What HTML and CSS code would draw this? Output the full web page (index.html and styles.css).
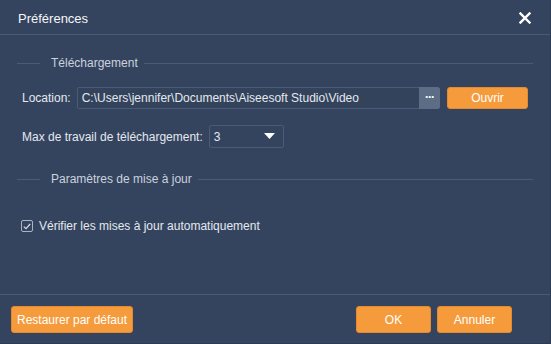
FILE: index.html
```html
<!DOCTYPE html>
<html lang="fr">
<head>
    <meta charset="UTF-8">
    <title>Préférences</title>
    <link rel="stylesheet" href="styles.css">
</head>
<body>
    <div class="dialog">
        <header class="title-bar">
            <h1>Préférences</h1>
            <span class="close">
                <svg width="12" height="12" viewBox="0 0 12 12">
                    <path d="M1.5 1.5 L10.5 10.5 M10.5 1.5 L1.5 10.5" stroke="#ffffff" stroke-width="2.4" stroke-linecap="square"/>
                </svg>
            </span>
        </header>

        <main class="content">
            <div class="legend">
                <span class="line-short"></span>
                <span class="legend-text">Téléchargement</span>
                <span class="line-long"></span>
            </div>

            <div class="row row-location">
                <span class="label">Location:</span>
                <div class="path-field">
                    <span class="path-text">C:\Users\jennifer\Documents\Aiseesoft Studio\Video</span>
                    <span class="browse">&middot;&middot;&middot;</span>
                </div>
                <button class="btn btn-open">Ouvrir</button>
            </div>

            <div class="row row-max">
                <span class="label">Max de travail de téléchargement:</span>
                <div class="select">
                    <span>3</span>
                    <svg width="11" height="7" viewBox="0 0 11 7"><path d="M0 0 H11 L5.5 6 Z" fill="#ffffff"/></svg>
                </div>
            </div>

            <div class="legend legend-update">
                <span class="line-short"></span>
                <span class="legend-text">Paramètres de mise à jour</span>
                <span class="line-long"></span>
            </div>

            <label class="check-row">
                <span class="checkbox">
                    <svg width="8" height="7" viewBox="0 0 8 7"><path d="M0.8 3.6 L3 5.6 L7.2 1" stroke="#d8dee7" stroke-width="1.2" fill="none"/></svg>
                </span>
                <span>Vérifier les mises à jour automatiquement</span>
            </label>
        </main>

        <footer class="footer">
            <button class="btn btn-reset">Restaurer par défaut</button>
            <div class="actions">
                <button class="btn btn-ok">OK</button>
                <button class="btn btn-cancel">Annuler</button>
            </div>
        </footer>
    </div>
</body>
</html>
```

FILE: styles.css
```css
:root {
    --bg-color: #34445e;
    --line-color: #4b5b77;
    --text-color: #e4e8ef;
    --dim-text: #cbd2de;
    --orange: #f59b3c;
    --orange-border: #e58b2e;
}

* {
    margin: 0;
    padding: 0;
    box-sizing: border-box;
}

body {
    width: 551px;
    height: 344px;
    background-color: var(--bg-color);
    color: var(--text-color);
    font-family: "Liberation Sans", Arial, sans-serif;
    font-size: 12px;
    overflow: hidden;
}

.dialog {
    display: flex;
    flex-direction: column;
    height: 344px;
    border-right: 1px solid #2c3a51;
    border-bottom: 1px solid #2c3a51;
}

.title-bar {
    display: flex;
    align-items: center;
    justify-content: space-between;
    height: 35px;
    padding: 2px 19px 0 18px;
    border-bottom: 1px solid var(--line-color);
}

.title-bar h1 {
    font-size: 13px;
    font-weight: normal;
    color: #f4f6f9;
}

.close {
    display: flex;
}

.content {
    padding: 20px 22px 0 17px;
}

.legend {
    display: flex;
    align-items: center;
    height: 16px;
}

.line-short {
    width: 23px;
    border-top: 1px solid var(--line-color);
}

.line-long {
    flex: 1;
    border-top: 1px solid var(--line-color);
    margin-right: -5px;
}

.legend-text {
    color: var(--dim-text);
    padding: 0 6px 0 11px;
}

.row {
    display: flex;
    align-items: center;
    padding-left: 5px;
}

.row-location {
    margin-top: 16px;
}

.row-max {
    margin-top: 16px;
}

.label {
    margin-right: 6px;
}

.path-field {
    display: flex;
    flex: 1;
    height: 22px;
    border: 1px solid var(--line-color);
    border-radius: 2px;
    background-color: #33435c;
}

.path-text {
    flex: 1;
    padding-left: 4px;
    line-height: 20px;
    white-space: nowrap;
    overflow: hidden;
}

.browse {
    width: 21px;
    margin: -1px -1px -1px 0;
    background-color: #5d6d86;
    border-radius: 0 3px 3px 0;
    color: #ffffff;
    font-weight: bold;
    text-align: center;
    line-height: 20px;
    letter-spacing: -1px;
}

.btn {
    height: 22px;
    border: 1px solid var(--orange-border);
    border-radius: 3px;
    background-color: var(--orange);
    color: #ffffff;
    font-family: inherit;
    font-size: 12px;
}

.btn-open {
    width: 81px;
    margin-left: 7px;
}

.select {
    display: flex;
    align-items: center;
    justify-content: space-between;
    width: 75px;
    height: 23px;
    padding: 0 8px 0 4px;
    border: 1px solid var(--line-color);
    border-radius: 2px;
}

.legend-update {
    margin-top: 23px;
}

.check-row {
    display: flex;
    align-items: center;
    gap: 6px;
    margin-top: 31px;
    padding-left: 4px;
    height: 16px;
}

.checkbox {
    display: flex;
    align-items: center;
    justify-content: center;
    width: 12px;
    height: 12px;
    border: 1px solid #aab4c4;
    border-radius: 2px;
}

.footer {
    display: flex;
    justify-content: space-between;
    margin-top: auto;
    padding: 11px 38px 10px 11px;
    border-top: 1px solid var(--line-color);
}

.footer .btn {
    height: 27px;
}

.btn-reset {
    width: 122px;
    white-space: nowrap;
}

.actions {
    display: flex;
    gap: 6px;
}

.btn-ok,
.btn-cancel {
    width: 75px;
}
```
